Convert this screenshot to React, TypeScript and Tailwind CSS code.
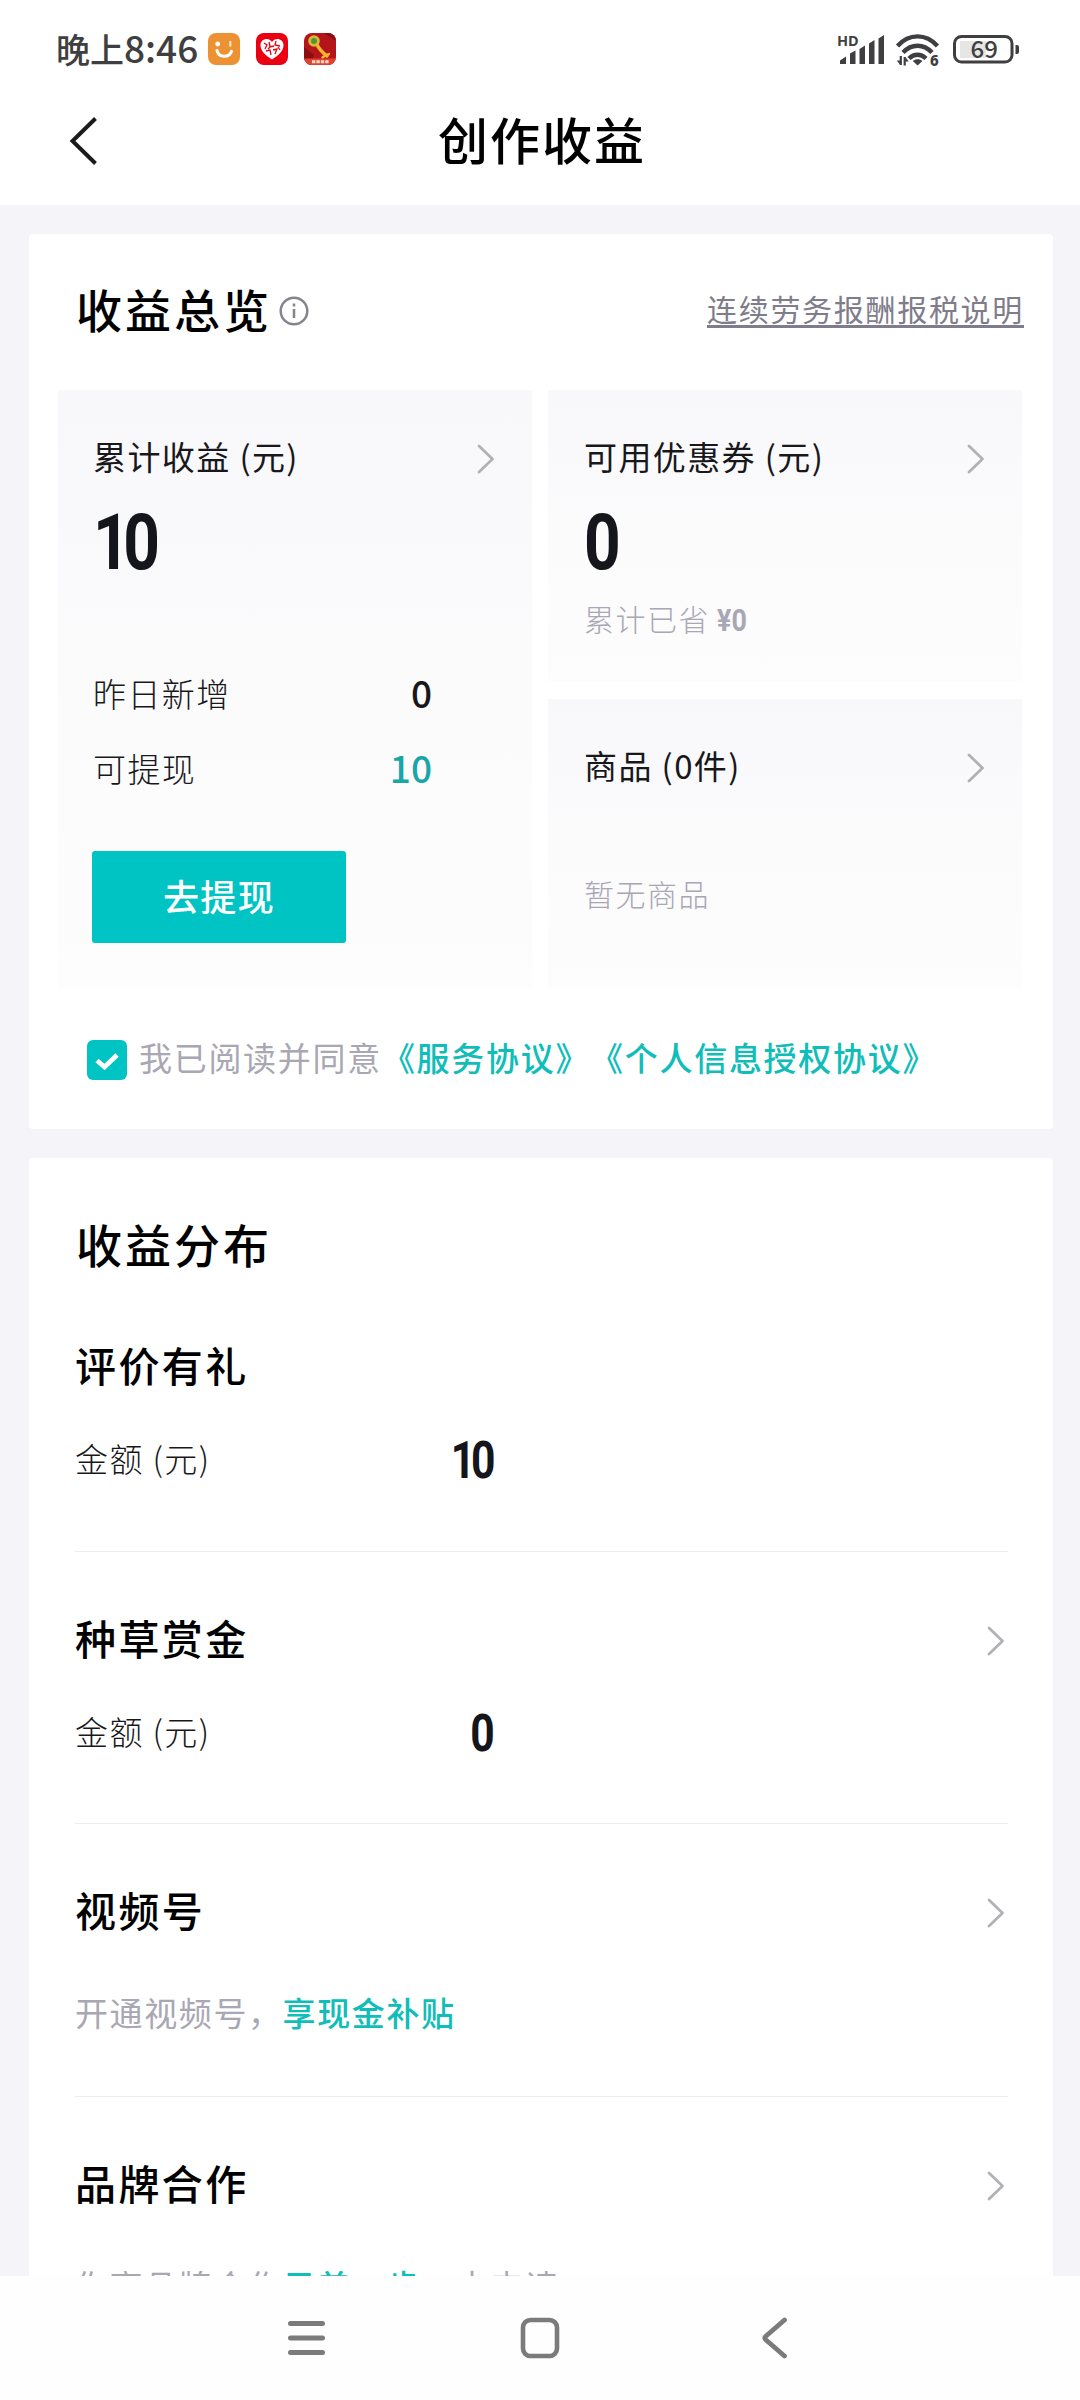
import type { ReactNode } from 'react'
import clsx from 'clsx'

interface Section {
  title: string
  amount?: string
  arrow?: boolean
  hint?: ReactNode
}

const Teal = ({ children }: { children: ReactNode }) => (
  <span className="font-medium text-[#10bdb9]">{children}</span>
)

const SECTIONS: Section[] = [
  { title: '评价有礼', amount: '10' },
  { title: '种草赏金', amount: '0', arrow: true },
  { title: '视频号', arrow: true, hint: <>开通视频号，<Teal>享现金补贴</Teal></> },
  { title: '品牌合作', arrow: true, hint: <>你离品牌合作<Teal>只差一步</Teal>，去申请</> },
]

function Chevron({ className }: { className?: string }) {
  return (
    <svg className={clsx('shrink-0', className)} width="18" height="30" viewBox="0 0 18 30" fill="none"
      stroke="#b2b2b6" strokeWidth="2.8" strokeLinecap="round" strokeLinejoin="round">
      <path d="M2 2 15.5 15 2 28" />
    </svg>
  )
}

// Narrow bold digits used for every amount
function Digits({ children, className }: { children: ReactNode; className?: string }) {
  return (
    <span className={clsx("inline-block font-['Roboto',sans-serif] font-bold text-[#15151c]", className)}>
      {children}
    </span>
  )
}

function StatusBar() {
  return (
    <div className="flex h-[98px] items-center justify-between pl-[56px] pr-[60px] text-[#3f3f41]">
      <div className="flex items-center">
        <span className="flex items-baseline pb-1 font-medium leading-none">
          <span className="text-[34px]">晚上</span>
          <span className="text-[37px]">8:46</span>
        </span>
        <svg className="ml-[10px]" width="32" height="32" viewBox="0 0 32 32">
          <rect width="32" height="32" rx="8" fill="#ec9232" />
          <circle cx="9.7" cy="11" r="2.4" fill="#fff" />
          <path d="M22.3 8.8v4" stroke="#fbe3c8" strokeWidth="2.2" strokeLinecap="round" />
          <path d="M9 17.5c1.5 7.5 12.5 7.5 14.5.8" stroke="#fff" strokeWidth="3" strokeLinecap="round" fill="none" />
        </svg>
        <svg className="ml-4" width="32" height="32" viewBox="0 0 32 32">
          <rect width="32" height="32" rx="8" fill="#ea0010" />
          <path d="M16 26.5C9 22 4.500 17.500 4.500 12.200c0-6.600 8.500-8.300 11.500-3.200 3-5.100 11.500-3.400 11.500 3.200 0 5.300-4.500 9.800-11.500 14.300z" fill="#fff" />
          <path d="M8 10l3 2-2 4M13 9l1 5 4-1M20 8l-1 4 5 1M10 18l4-1 1 5M17 17l4-1-2 5M15 13l-3 3M22 14l2 3" stroke="#ea0010" strokeWidth="1.3" fill="none" />
        </svg>
        <svg className="ml-4" width="32" height="32" viewBox="0 0 32 32">
          <defs>
            <clipPath id="appTile"><rect width="32" height="32" rx="8" /></clipPath>
          </defs>
          <g clipPath="url(#appTile)">
            <rect width="32" height="32" fill="#b3151a" />
            <path d="M0 14 10 22 6 32H0zM20 0l12 8V0z" fill="#8a0d12" />
            <path d="M12 10c2.5 5 6 9.5 11 13" stroke="#f1b62e" strokeWidth="3.4" strokeLinecap="round" />
            <path d="M18.5 24.5c3-2.500 5-2.500 6.500-3.500" stroke="#f1b62e" strokeWidth="2.4" strokeLinecap="round" fill="none" />
            <circle cx="10" cy="8" r="5.8" fill="#dcb63a" />
            <circle cx="10" cy="8" r="3" fill="#4f9a2c" />
            <rect y="25.5" width="32" height="6.5" fill="#e2422f" />
            <path d="M8 28.8h17" stroke="#f7d9c5" strokeWidth="3" strokeDasharray="3.4 1" />
          </g>
        </svg>
      </div>
      <svg className="overflow-visible" width="184" height="36" viewBox="836 31 184 36" fill="#3f3f41">
        <text x="837" y="45.5" fontSize="14.5" fontWeight="700" fontFamily="Noto Sans, sans-serif">HD</text>
        <path d="M840 64v-3.500l6-4V64zM850 64V53.500l5.500-3V64zM859.500 64V49l5.500-3.500V64zM869 64V43.500l5.500-3.500V64zM878.500 64V38.500l5.500-3.500V64z" />
        <g fill="none" stroke="#3f3f41" strokeWidth="4.4">
          <path d="M897.5 46c11.500-12.800 28.500-12.800 40 0" />
          <path d="M903 52.5c8.500-9 20.500-9 29 0" />
          <path d="M909 58.5c5-5 12-5 17 0" />
        </g>
        <path d="M912.8 61c2.800-2.400 6.800-2.400 9.600 0l-4.800 4.500z" />
        <path d="M900.8 56v9M904.700 65.500V57" stroke="#3f3f41" strokeWidth="2.2" />
        <path d="M896.8 60.500h3.500V65zM908.800 61.500h-3.500V57z" />
        <text x="930" y="66" fontSize="15" fontWeight="800" fontFamily="Noto Sans, sans-serif">6</text>
        <rect x="960" y="41" width="26" height="17" fill="#e6e6e6" />
        <rect x="954.5" y="36.5" width="57.5" height="25.5" rx="7" fill="none" stroke="#3f3f41" strokeWidth="3" />
        <path d="M1015.5 45h1.500a2 2 0 0 1 2 2v5a2 2 0 0 1-2 2h-1.500z" />
        <text x="970.5" y="57.5" fontSize="24" fontWeight="500" fontFamily="Noto Sans CJK SC, sans-serif">69</text>
      </svg>
    </div>
  )
}

function TitleBar() {
  return (
    <div className="grid h-[107px] grid-cols-[1fr_auto_1fr] items-center pb-[27px]">
      <svg className="ml-[68px] mt-1.5" width="32" height="52" viewBox="0 0 32 52" fill="none" stroke="#1b1b1b" strokeWidth="4">
        <path d="M27.5 3.5 4.500 26 27.500 48.500" />
      </svg>
      <h1 className="ml-[4px] text-[50px] font-medium leading-none tracking-[2px] text-black">创作收益</h1>
    </div>
  )
}

const cardBg = 'bg-linear-to-b from-[#f8f8fb] via-[#fbfbfc] to-[#fdfdfd]'

function CardTitle({ children }: { children: ReactNode }) {
  return (
    <div className="flex h-[49px] items-center justify-between pr-[37px] text-[33px] tracking-[1.4px] text-[#18181b]">
      <span className="pt-px">{children}</span>
      <Chevron className="mt-1" />
    </div>
  )
}

function Overview() {
  return (
    <section className="rounded-[4px] bg-white">
      <div className="flex h-[156px] items-center pb-2 pl-[47px] pr-[29px]">
        <h2 className="text-[46px] font-medium tracking-[3px] text-black">收益总览</h2>
        <svg className="ml-[6px] mt-1.5" width="32" height="32" viewBox="0 0 32 32" fill="none" stroke="#85838f" strokeWidth="2.5">
          <circle cx="16" cy="16" r="13.3" />
          <path d="M16 14v9M16 8.500v3" />
        </svg>
        <a className="ml-auto text-[30px] tracking-[1.7px] text-[#7f7d8b] underline decoration-[3px] underline-offset-[4px]">
          连续劳务报酬报税说明
        </a>
      </div>

      <div className="grid h-[598px] grid-cols-2 gap-4 pl-[29px] pr-[31px]">
        <div className={clsx('pl-[35px] pt-[42px]', cardBg)}>
          <CardTitle>累计收益 (元)</CardTitle>
          <div className="flex h-[122px] items-center">
            <Digits className="origin-left scale-x-[0.82] pr-[0.1em] text-[78px] tracking-[-0.1em]">10</Digits>
          </div>
          <div className="mt-[66px] flex h-[49px] w-[339px] items-center justify-between text-[#18181b]">
            <span className="text-[33px] font-light tracking-[1.4px]">昨日新增</span>
            <span className="pb-0.5 text-[37px] font-medium">0</span>
          </div>
          <div className="mt-[25px] flex h-[51px] w-[339px] items-center justify-between text-[#18181b]">
            <span className="text-[33px] font-light tracking-[1.4px]">可提现</span>
            <span className="pb-0.5 text-[37px] font-medium text-[#1ba5aa]">10</span>
          </div>
          <button className="-ml-px mt-[57px] h-[92px] w-[254px] rounded-[3px] bg-[#00c3c4] pb-1 text-[36px] font-medium tracking-[1.4px] text-white">
            去提现
          </button>
        </div>

        <div className="flex flex-col gap-[17px]">
          <div className={clsx('h-[292px] pl-[36px] pt-[42px]', cardBg)}>
            <CardTitle>可用优惠券 (元)</CardTitle>
            <div className="flex h-[122px] items-center">
              <Digits className="origin-left scale-x-[0.82] text-[78px]">0</Digits>
            </div>
            <div className="flex h-[30px] items-center text-[30px] font-light tracking-[1.5px] text-[#a9a7b5]">
              累计已省
              <Digits className="ml-[7px] mt-[4px] origin-left scale-x-[0.84] text-[32px] tracking-normal text-[#a9a7b5]!">¥0</Digits>
            </div>
          </div>
          <div className={clsx('flex-1 pl-[36px] pt-[42px]', cardBg)}>
            <CardTitle>商品 (0件)</CardTitle>
            <div className="mt-[88px] flex h-[30px] items-center text-[30px] font-light tracking-[1.5px] text-[#a9a7b5]">
              暂无商品
            </div>
          </div>
        </div>
      </div>

      <div className="flex h-[141px] items-center pl-[58px]">
        <svg className="mt-[3px]" width="40" height="40" viewBox="0 0 40 40">
          <rect width="40" height="40" rx="6" fill="#00c3c4" />
          <path d="M10 20.5 17.500 27 30 15" fill="none" stroke="#fff" strokeWidth="4.8" />
        </svg>
        <p className="ml-[12px] pb-0.5 text-[33px] tracking-[1.7px] text-[#a9a7b3] [text-spacing-trim:space-all]">
          我已阅读并同意<Teal>《服务协议》《个人信息授权协议》</Teal>
        </p>
      </div>
    </section>
  )
}

function Distribution() {
  return (
    <section className="mt-[29px] rounded-t-[4px] bg-white pl-[46px] pr-[45px] pt-[61px]">
      <h2 className="mb-[12px] ml-px h-12 text-[46px] font-medium leading-[48px] tracking-[3px] text-black">收益分布</h2>
      {SECTIONS.map(s => (
        <div key={s.title} className="h-[272.5px] border-b border-[#ededf0] pt-[62px]">
          <div className="flex h-12 items-center justify-between pr-[3px]">
            <h3 className="text-[41px] font-medium tracking-[2.4px] text-black">{s.title}</h3>
            {s.arrow && <Chevron className="mt-1.5" />}
          </div>
          {s.amount ? (
            <div className="mt-[46px] flex h-12 w-[420px] items-center justify-between">
              <span className="text-[33px] font-light tracking-[1.4px] text-[#18181b]">金额 (元)</span>
              <Digits className="mt-[4px] origin-right scale-x-[0.82] pr-[0.1em] text-[52px] tracking-[-0.1em]">
                {s.amount}
              </Digits>
            </div>
          ) : (
            <p className="mt-[54px] h-12 text-[33px] leading-[48px] tracking-[1.6px] text-[#a9a7b3]">{s.hint}</p>
          )}
        </div>
      ))}
    </section>
  )
}

function NavBar() {
  return (
    <nav className="flex h-[124px] items-center bg-[#fefefe] pl-[286px]">
      <svg width="40" height="40" viewBox="0 0 40 40" stroke="#7b7b7b" strokeWidth="5" strokeLinecap="round">
        <path d="M4.5 5.500h32M4.500 20h32M4.500 34.500h32" />
      </svg>
      <svg className="ml-[193px]" width="42" height="42" viewBox="0 0 42 42" fill="none" stroke="#7b7b7b" strokeWidth="4.6">
        <rect x="4" y="3" width="34" height="36" rx="7.5" />
      </svg>
      <svg className="ml-[200px]" width="28" height="42" viewBox="0 0 28 42" fill="none" stroke="#7b7b7b" strokeWidth="4.8" strokeLinecap="round">
        <path d="M23.5 3 4.800 19.200q-1.800 1.800 0 3.600L23.500 39" />
      </svg>
    </nav>
  )
}

export default function App() {
  return (
    <div className="flex h-[2400px] w-[1080px] flex-col overflow-hidden bg-white font-['Noto_Sans_CJK_SC',sans-serif]">
      <header className="bg-white">
        <StatusBar />
        <TitleBar />
      </header>
      <main className="h-[2071px] overflow-hidden bg-[#f4f4f9] pl-[29px] pr-[27px] pt-[29px]">
        <Overview />
        <Distribution />
      </main>
      <NavBar />
    </div>
  )
}
